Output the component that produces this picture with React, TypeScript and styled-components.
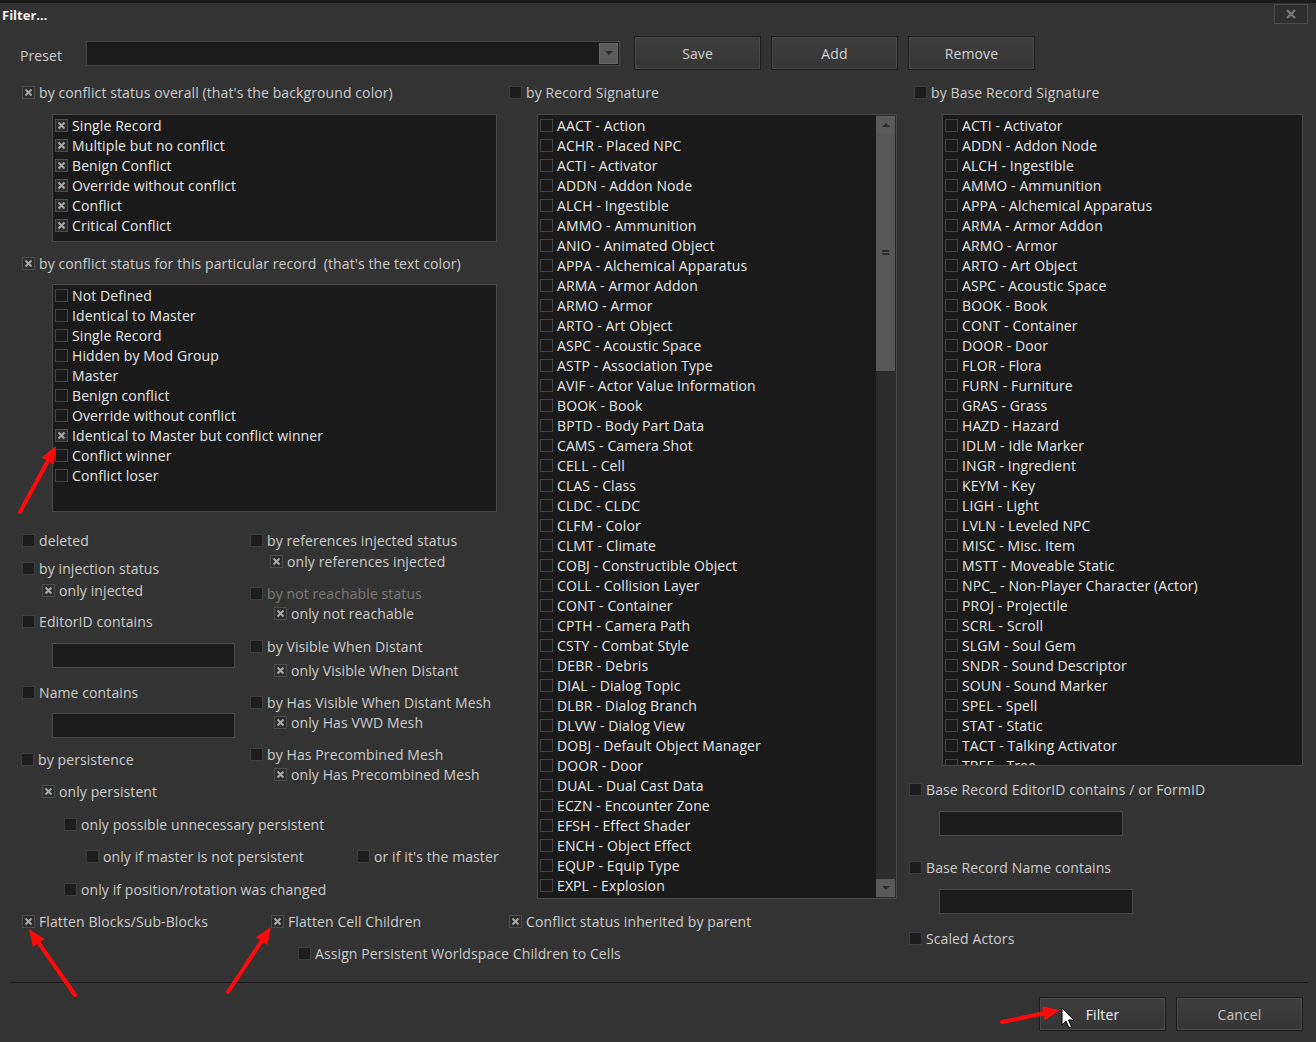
import React from 'react';
import styled, { createGlobalStyle } from 'styled-components';

const GlobalStyle = createGlobalStyle`
  html, body { margin: 0; padding: 0; background: #333333; }
  body {
    font-family: "Open Sans", "Noto Sans", "Liberation Sans", sans-serif;
    font-size: 14px;
    letter-spacing: 0.1px;
    color: #cdcdcd;
  }
  * { box-sizing: border-box; }
`;

const Window = styled.div`
  position: relative;
  width: 1316px;
  height: 1042px;
  background: #333333;
  overflow: hidden;
`;

const TitleBar = styled.div`
  height: 30px;
  border-top: 3px solid #1b1b1b;
  padding: 0 8px 3px 2px;
  display: flex;
  align-items: center;
  justify-content: space-between;
`;

const Title = styled.div`
  font-weight: 700;
  font-size: 13px;
  letter-spacing: 0;
  color: #f2f2f2;
`;

const CloseBtn = styled.div`
  width: 34px;
  height: 20px;
  margin-top: -2px;
  border: 1px solid #4c4c4c;
  background: #2e2e2e;
  display: flex;
  align-items: center;
  justify-content: center;
`;

const PresetRow = styled.div`
  margin-top: 6px;
  height: 34px;
  padding-left: 20px;
  display: flex;
  align-items: center;
`;

const PresetLabel = styled.div`
  width: 66px;
  padding-top: 4px;
  color: #cdcdcd;
`;

const Combo = styled.div`
  width: 534px;
  height: 25px;
  background: #1b1b1b;
  border: 1px solid #464646;
  display: flex;
  justify-content: flex-end;
  padding: 1px;
`;

const DropBtn = styled.div`
  width: 19px;
  height: 21px;
  background: #5a5a5a;
  border: 1px solid #666;
  display: flex;
  align-items: center;
  justify-content: center;
`;

const Triangle = styled.div<{ $up?: boolean }>`
  width: 0;
  height: 0;
  border-left: 4px solid transparent;
  border-right: 4px solid transparent;
  ${(p) => (p.$up ? 'border-bottom: 4px solid #2a2a2a;' : 'border-top: 4px solid #2a2a2a;')}
`;

const ButtonGroup = styled.div`
  margin-left: 14px;
  display: flex;
  gap: 10px;
`;

const Button = styled.div<{ $tone?: 'default' | 'dim' }>`
  width: 127px;
  height: 34px;
  display: flex;
  align-items: center;
  justify-content: center;
  background: linear-gradient(#3e3e3e, #353535);
  border: 1px solid #1c1c1c;
  box-shadow: inset 0 0 0 1px #484848;
  font-size: 14px;
  color: ${(p) => (p.$tone === 'default' ? '#f4f4f4' : p.$tone === 'dim' ? '#c4c4c4' : '#d2d2d2')};
`;

const MainGrid = styled.div`
  margin-top: 12px;
  padding-left: 20px;
  display: grid;
  grid-template-columns: 487px 398px 403px;
  grid-template-rows: 817px auto;
  grid-template-areas:
    "c1 c2 c3"
    "bt bt c3";
`;

const Column = styled.div<{ $area: string }>`
  grid-area: ${(p) => p.$area};
  display: flex;
  flex-direction: column;
  align-items: flex-start;
`;

const Row = styled.label<{ $ml?: number; $mt?: number; $disabled?: boolean; $w?: number }>`
  display: flex;
  align-items: center;
  gap: 4px;
  height: 20px;
  white-space: pre;
  margin-left: ${(p) => p.$ml ?? 0}px;
  margin-top: ${(p) => p.$mt ?? 0}px;
  color: ${(p) => (p.$disabled ? '#7c7c7c' : '#cdcdcd')};
  ${(p) => (p.$w ? `width: ${p.$w}px; flex: none;` : '')}
`;

const Box = styled.span<{ $checked?: boolean; $inList?: boolean }>`
  width: 13px;
  height: 13px;
  flex: none;
  display: inline-flex;
  align-items: center;
  justify-content: center;
  border: 1px solid ${(p) => (p.$inList ? '#444444' : '#3e3e3e')};
  background: ${(p) => (p.$checked ? '#2c2c2c' : p.$inList ? '#1a1a1a' : '#1d1d1d')};
  ${(p) => (p.$checked ? 'border-color: #4e4e4e;' : '')}
`;

const Check: React.FC<{ checked?: boolean; inList?: boolean }> = ({ checked, inList }) => (
  <Box $checked={checked} $inList={inList}>
    {checked && (
      <svg width="9" height="9" viewBox="0 0 9 9">
        <path d="M1.5 1.5 L7.5 7.5 M7.5 1.5 L1.5 7.5" stroke="#a8a8a8" strokeWidth="2" />
      </svg>
    )}
  </Box>
);

const ListBox = styled.div<{ $ml: number; $mt: number; $w: number; $h: number }>`
  margin-left: ${(p) => p.$ml}px;
  margin-top: ${(p) => p.$mt}px;
  width: ${(p) => p.$w}px;
  height: ${(p) => p.$h}px;
  background: #1a1a1a;
  border: 1px solid #4a4a4a;
  display: flex;
  overflow: hidden;
`;

const Items = styled.div`
  flex: 1;
  overflow: hidden;
  padding-left: 2px;
`;

const Item = styled.div`
  display: flex;
  align-items: center;
  gap: 4px;
  height: 20px;
  white-space: nowrap;
  color: #e8e8e8;
`;

const ScrollBar = styled.div`
  width: 20px;
  display: flex;
  flex-direction: column;
  background: #2c2c2c;
  padding: 1px 0;
`;

const ScrollBtn = styled.div`
  height: 18px;
  background: #5a5a5a;
  border-right: 1px solid #2a2a2a;
  display: flex;
  align-items: center;
  justify-content: center;
  flex: none;
`;

const Thumb = styled.div`
  height: 238px;
  background: #575757;
  border-right: 1px solid #262626;
  border-bottom: 1px solid #262626;
  display: flex;
  align-items: center;
  justify-content: center;
  flex: none;
`;

const Grip = styled.div`
  width: 7px;
  height: 5px;
  border-top: 2px solid #2c2c2c;
  border-bottom: 2px solid #2c2c2c;
`;

const Track = styled.div`
  flex: 1;
`;

const TextInput = styled.div<{ $ml: number; $mt: number; $w: number }>`
  margin-left: ${(p) => p.$ml}px;
  margin-top: ${(p) => p.$mt}px;
  width: ${(p) => p.$w}px;
  height: 25px;
  background: #1b1b1b;
  border: 1px solid #4a4a4a;
`;

const Split = styled.div<{ $mt: number }>`
  display: flex;
  margin-top: ${(p) => p.$mt}px;
`;

const SubCol = styled.div<{ $w: number }>`
  width: ${(p) => p.$w}px;
  display: flex;
  flex-direction: column;
  align-items: flex-start;
`;

const BottomArea = styled.div`
  grid-area: bt;
  padding-top: 12px;
  display: flex;
  flex-direction: column;
`;

const BottomLine = styled.div<{ $mt?: number; $ml?: number }>`
  display: flex;
  margin-top: ${(p) => p.$mt ?? 0}px;
  margin-left: ${(p) => p.$ml ?? 0}px;
`;

const Separator = styled.div`
  margin: 19px 8px 0 10px;
  height: 1px;
  background: #1c1c1c;
`;

const Footer = styled.div`
  margin-top: 14px;
  padding-right: 13px;
  display: flex;
  justify-content: flex-end;
  gap: 10px;
`;

const Overlay = styled.svg`
  position: absolute;
  left: 0;
  top: 0;
  pointer-events: none;
`;

const recordSigs = [
  'AACT - Action', 'ACHR - Placed NPC', 'ACTI - Activator', 'ADDN - Addon Node', 'ALCH - Ingestible',
  'AMMO - Ammunition', 'ANIO - Animated Object', 'APPA - Alchemical Apparatus', 'ARMA - Armor Addon',
  'ARMO - Armor', 'ARTO - Art Object', 'ASPC - Acoustic Space', 'ASTP - Association Type',
  'AVIF - Actor Value Information', 'BOOK - Book', 'BPTD - Body Part Data', 'CAMS - Camera Shot',
  'CELL - Cell', 'CLAS - Class', 'CLDC - CLDC', 'CLFM - Color', 'CLMT - Climate',
  'COBJ - Constructible Object', 'COLL - Collision Layer', 'CONT - Container', 'CPTH - Camera Path',
  'CSTY - Combat Style', 'DEBR - Debris', 'DIAL - Dialog Topic', 'DLBR - Dialog Branch',
  'DLVW - Dialog View', 'DOBJ - Default Object Manager', 'DOOR - Door', 'DUAL - Dual Cast Data',
  'ECZN - Encounter Zone', 'EFSH - Effect Shader', 'ENCH - Object Effect', 'EQUP - Equip Type',
  'EXPL - Explosion', '',
];

const baseSigs = [
  'ACTI - Activator', 'ADDN - Addon Node', 'ALCH - Ingestible', 'AMMO - Ammunition',
  'APPA - Alchemical Apparatus', 'ARMA - Armor Addon', 'ARMO - Armor', 'ARTO - Art Object',
  'ASPC - Acoustic Space', 'BOOK - Book', 'CONT - Container', 'DOOR - Door', 'FLOR - Flora',
  'FURN - Furniture', 'GRAS - Grass', 'HAZD - Hazard', 'IDLM - Idle Marker', 'INGR - Ingredient',
  'KEYM - Key', 'LIGH - Light', 'LVLN - Leveled NPC', 'MISC - Misc. Item', 'MSTT - Moveable Static',
  'NPC_ - Non-Player Character (Actor)', 'PROJ - Projectile', 'SCRL - Scroll', 'SLGM - Soul Gem',
  'SNDR - Sound Descriptor', 'SOUN - Sound Marker', 'SPEL - Spell', 'STAT - Static',
  'TACT - Talking Activator', 'TREE - Tree',
];

const overall = [
  'Single Record', 'Multiple but no conflict', 'Benign Conflict', 'Override without conflict',
  'Conflict', 'Critical Conflict',
];

const particular: [string, boolean][] = [
  ['Not Defined', false], ['Identical to Master', false], ['Single Record', false],
  ['Hidden by Mod Group', false], ['Master', false], ['Benign conflict', false],
  ['Override without conflict', false], ['Identical to Master but conflict winner', true],
  ['Conflict winner', false], ['Conflict loser', false],
];

const CheckItem: React.FC<{ label: string; checked?: boolean }> = ({ label, checked }) => (
  <Item>
    <Check checked={checked} inList />
    {label && <span>{label}</span>}
  </Item>
);

const Opt: React.FC<{
  label: string; checked?: boolean; ml?: number; mt?: number; disabled?: boolean; w?: number;
}> = ({ label, checked, ml, mt, disabled, w }) => (
  <Row $ml={ml} $mt={mt} $disabled={disabled} $w={w}>
    <Check checked={checked} />
    <span>{label}</span>
  </Row>
);

const Arrow: React.FC<{ x1: number; y1: number; x2: number; y2: number }> = ({ x1, y1, x2, y2 }) => {
  const a = Math.atan2(y2 - y1, x2 - x1);
  const len = 17;
  const half = 7;
  const bx = x2 - Math.cos(a) * len;
  const by = y2 - Math.sin(a) * len;
  const px = -Math.sin(a) * half;
  const py = Math.cos(a) * half;
  return (
    <g>
      <line x1={x1} y1={y1} x2={bx} y2={by} stroke="#ff0a0a" strokeWidth="4" strokeLinecap="round" />
      <polygon points={`${x2},${y2} ${bx + px},${by + py} ${bx - px},${by - py}`} fill="#ff0a0a" />
    </g>
  );
};

export default function App() {
  return (
    <Window>
      <GlobalStyle />
      <TitleBar>
        <Title>Filter...</Title>
        <CloseBtn>
          <svg width="10" height="10" viewBox="0 0 10 10">
            <path d="M1 1 L9 9 M9 1 L1 9" stroke="#7a7a7a" strokeWidth="2.4" />
          </svg>
        </CloseBtn>
      </TitleBar>

      <PresetRow>
        <PresetLabel>Preset</PresetLabel>
        <Combo>
          <DropBtn>
            <Triangle />
          </DropBtn>
        </Combo>
        <ButtonGroup>
          <Button>Save</Button>
          <Button>Add</Button>
          <Button>Remove</Button>
        </ButtonGroup>
      </PresetRow>

      <MainGrid>
        <Column $area="c1">
          <Opt ml={2} checked label="by conflict status overall (that's the background color)" />
          <ListBox $ml={32} $mt={12} $w={445} $h={128}>
            <Items>
              {overall.map((l) => (
                <CheckItem key={l} label={l} checked />
              ))}
            </Items>
          </ListBox>
          <Opt ml={2} mt={11} checked label="by conflict status for this particular record  (that's the text color)" />
          <ListBox $ml={32} $mt={11} $w={445} $h={228}>
            <Items>
              {particular.map(([l, c]) => (
                <CheckItem key={l} label={l} checked={c} />
              ))}
            </Items>
          </ListBox>
          <Split $mt={18}>
            <SubCol $w={230}>
              <Opt ml={2} label="deleted" />
              <Opt ml={2} mt={8} label="by injection status" />
              <Opt ml={22} mt={2} checked label="only injected" />
              <Opt ml={2} mt={11} label="EditorID contains" />
              <TextInput $ml={32} $mt={12} $w={183} />
              <Opt ml={2} mt={14} label="Name contains" />
              <TextInput $ml={32} $mt={11} $w={183} />
              <Opt ml={1} mt={11} label="by persistence" />
              <Opt ml={22} mt={12} checked label="only persistent" />
            </SubCol>
            <SubCol $w={257}>
              <Opt label="by references injected status" />
              <Opt ml={20} mt={1} checked label="only references injected" />
              <Opt mt={12} disabled label="by not reachable status" />
              <Opt ml={24} checked label="only not reachable" />
              <Opt mt={13} label="by Visible When Distant" />
              <Opt ml={24} mt={4} checked label="only Visible When Distant" />
              <Opt mt={12} label="by Has Visible When Distant Mesh" />
              <Opt ml={24} checked label="only Has VWD Mesh" />
              <Opt mt={12} label="by Has Precombined Mesh" />
              <Opt ml={24} checked label="only Has Precombined Mesh" />
            </SubCol>
          </Split>
          <Opt ml={44} mt={13} label="only possible unnecessary persistent" />
          <BottomLine $mt={12} $ml={66}>
            <Opt w={271} label="only if master is not persistent" />
            <Opt label="or if it's the master" />
          </BottomLine>
          <Opt ml={44} mt={13} label="only if position/rotation was changed" />
        </Column>

        <Column $area="c2">
          <Opt ml={2} label="by Record Signature" />
          <ListBox $ml={30} $mt={12} $w={360} $h={785}>
            <Items>
              {recordSigs.map((l, i) => (
                <CheckItem key={i} label={l} />
              ))}
            </Items>
            <ScrollBar>
              <ScrollBtn>
                <Triangle $up />
              </ScrollBtn>
              <Thumb>
                <Grip />
              </Thumb>
              <Track />
              <ScrollBtn>
                <Triangle />
              </ScrollBtn>
            </ScrollBar>
          </ListBox>
        </Column>

        <Column $area="c3">
          <Opt ml={9} label="by Base Record Signature" />
          <ListBox $ml={37} $mt={12} $w={361} $h={652}>
            <Items>
              {baseSigs.map((l) => (
                <CheckItem key={l} label={l} />
              ))}
            </Items>
          </ListBox>
          <Opt ml={4} mt={13} label="Base Record EditorID contains / or FormID" />
          <TextInput $ml={34} $mt={12} $w={184} />
          <Opt ml={4} mt={21} label="Base Record Name contains" />
          <TextInput $ml={34} $mt={12} $w={194} />
          <Opt ml={4} mt={14} label="Scaled Actors" />
        </Column>

        <BottomArea>
          <BottomLine $ml={2}>
            <Opt w={249} checked label="Flatten Blocks/Sub-Blocks" />
            <Opt w={238} checked label="Flatten Cell Children" />
            <Opt checked label="Conflict status inherited by parent" />
          </BottomLine>
          <BottomLine $mt={12} $ml={278}>
            <Opt label="Assign Persistent Worldspace Children to Cells" />
          </BottomLine>
        </BottomArea>
      </MainGrid>

      <Separator />
      <Footer>
        <Button $tone="default">Filter</Button>
        <Button $tone="dim">Cancel</Button>
      </Footer>

      <Overlay width="1316" height="1042" viewBox="0 0 1316 1042">
        <Arrow x1={20} y1={512} x2={56} y2={446} />
        <Arrow x1={75} y1={995} x2={29} y2={929} />
        <Arrow x1={228} y1={992} x2={271} y2={927} />
        <Arrow x1={1002} y1={1022} x2={1060} y2={1010} />
        <path
          d="M1062 1008 L1062 1025 L1066 1021 L1069 1028 L1071.5 1027 L1068.5 1020 L1074 1020 Z"
          fill="#ffffff"
          stroke="#000000"
          strokeWidth="1"
          strokeLinejoin="round"
        />
      </Overlay>
    </Window>
  );
}
